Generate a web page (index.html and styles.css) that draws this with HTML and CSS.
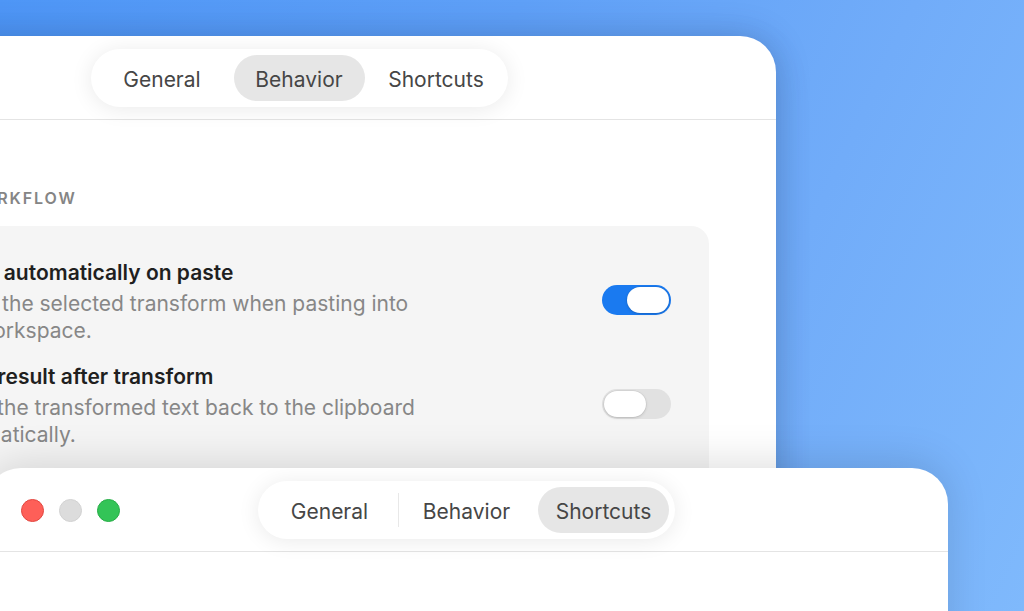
FILE: index.html
```html
<!DOCTYPE html>
<html lang="en">
<head>
<meta charset="utf-8">
<title>Settings</title>
<link rel="stylesheet" href="styles.css">
</head>
<body>
<div class="desktop">
  <section class="window window-back">
    <header class="titlebar">
      <nav class="tabs">
        <span class="tab">General</span>
        <span class="tab active">Behavior</span>
        <span class="tab">Shortcuts</span>
      </nav>
    </header>
    <div class="content">
      <h2 class="section-label">WORKFLOW</h2>
      <div class="card">
        <div class="row">
          <div class="row-text">
            <div class="row-title">Apply automatically on paste</div>
            <div class="row-desc">Apply the selected transform when pasting into the workspace.</div>
          </div>
          <span class="toggle on"><span class="knob"></span></span>
        </div>
        <div class="row">
          <div class="row-text">
            <div class="row-title">Copy result after transform</div>
            <div class="row-desc">Copy the transformed text back to the clipboard automatically.</div>
          </div>
          <span class="toggle"><span class="knob"></span></span>
        </div>
        <div class="row">
          <div class="row-text">
            <div class="row-title">Insert result at cursor</div>
            <div class="row-desc">Place the output at the current cursor position.</div>
          </div>
          <span class="toggle"><span class="knob"></span></span>
        </div>
      </div>
    </div>
  </section>

  <section class="window window-front">
    <header class="titlebar titlebar-grid">
      <div class="traffic">
        <span class="light red"></span>
        <span class="light gray"></span>
        <span class="light green"></span>
      </div>
      <nav class="tabs">
        <span class="tab">General</span>
        <span class="tab sep">Behavior</span>
        <span class="tab active">Shortcuts</span>
      </nav>
      <div></div>
    </header>
  </section>
</div>
</body>
</html>
```

FILE: styles.css
```css
* { box-sizing: border-box; }

html, body {
  margin: 0;
  padding: 0;
}

body {
  width: 1024px;
  height: 611px;
  overflow: hidden;
  font-family: "Inter", "Noto Sans", sans-serif;
}

.desktop {
  position: relative;
  width: 1024px;
  height: 611px;
  overflow: hidden;
  background: linear-gradient(115deg, #4e96f6 0%, #5fa0f7 40%, #71acf9 70%, #7fb9fc 100%);
}

.window {
  position: absolute;
  background: #ffffff;
  border-radius: 36px;
  overflow: hidden;
  box-shadow: 0 0 34px rgba(20, 40, 90, 0.22), 0 10px 40px rgba(0, 0, 0, 0.08);
}

.window-back {
  left: -178px;
  top: 36px;
  width: 954px;
  height: 700px;
}

.window-front {
  left: -15px;
  top: 468px;
  width: 963px;
  height: 300px;
  box-shadow: 0 -6px 40px rgba(0, 0, 0, 0.13);
}

.titlebar {
  height: 84px;
  border-bottom: 1px solid #e4e4e4;
  display: flex;
  align-items: center;
  justify-content: center;
}

.titlebar-grid {
  display: grid;
  grid-template-columns: 1fr auto 1fr;
  align-items: center;
}

.tabs {
  position: relative;
  display: flex;
  gap: 6px;
  padding: 6px;
  background: #ffffff;
  border-radius: 30px;
  box-shadow: 0 2px 22px rgba(0, 0, 0, 0.085);
}

.tab {
  position: relative;
  width: 131px;
  height: 46px;
  padding-top: 4px;
  border-radius: 23px;
  display: flex;
  align-items: center;
  justify-content: center;
  font-size: 21px;
  color: #464646;
}

.tab.active {
  background: #e6e6e6;
}

.tab.sep::before {
  content: "";
  position: absolute;
  left: -3.5px;
  top: 6px;
  bottom: 6px;
  width: 1px;
  background: #e8e8e8;
}

.traffic {
  display: flex;
  gap: 15px;
  padding-left: 36px;
  padding-top: 2px;
}

.light {
  width: 23px;
  height: 23px;
  border-radius: 50%;
}

.light.red {
  background: #fe5f58;
  border: 1px solid #e2463f;
}

.light.gray {
  background: #dcdcdc;
  border: 1px solid #d2d2d2;
}

.light.green {
  background: #33c457;
  border: 1px solid #26ad46;
}

.content {
  padding: 68px 67px 0 93px;
}

.section-label {
  margin: 0 0 18px 50px;
  font-size: 16px;
  line-height: 20px;
  font-weight: 600;
  letter-spacing: 1.9px;
  color: #858585;
}

.card {
  background: #f5f5f5;
  border-radius: 18px;
  padding: 35px 38px 40px 24px;
  display: flex;
  flex-direction: column;
  gap: 21px;
}

.row {
  display: flex;
  align-items: center;
  justify-content: space-between;
}

.row-text {
  max-width: 485px;
}

.row-title {
  font-size: 21px;
  line-height: 24px;
  font-weight: 600;
  color: #1f1f1f;
  margin-bottom: 5px;
}

.row-desc {
  font-size: 21px;
  line-height: 27px;
  color: #878787;
}

.toggle {
  position: relative;
  flex: none;
  width: 69px;
  height: 30px;
  margin-bottom: 6px;
  border-radius: 15px;
  background: #e1e1e1;
  display: flex;
  align-items: center;
  padding: 2px;
}

.toggle.on {
  background: #1a7af0;
  justify-content: flex-end;
}

.knob {
  width: 42px;
  height: 26px;
  border-radius: 13px;
  background: #ffffff;
  box-shadow: 0 0 0 0.5px rgba(0, 0, 0, 0.08), 0 1px 3px rgba(0, 0, 0, 0.15);
}
```
